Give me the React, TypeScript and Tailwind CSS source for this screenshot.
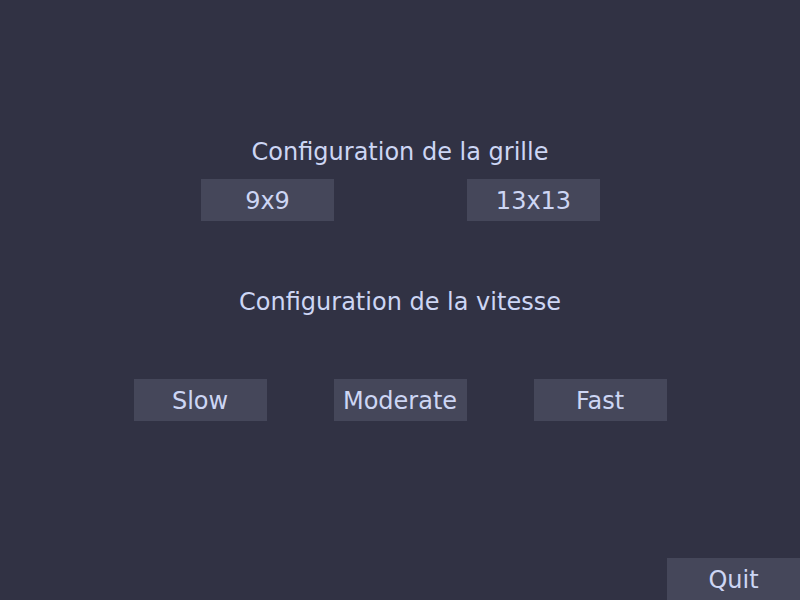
import React from 'react';

const Btn: React.FC<{ label: string }> = ({ label }) => (
  <button className="w-[133px] h-[42px] pt-[2px] bg-[#45475a] text-[#cdd6f4] text-[24px] flex items-center justify-center">
    {label}
  </button>
);

const App: React.FC = () => {
  return (
    <div
      className="w-[800px] h-[600px] bg-[#313244] flex flex-col text-[#cdd6f4]"
      style={{ fontFamily: '"DejaVu Sans", sans-serif' }}
    >
      {/* Grid size */}
      <div className="mt-[137px] h-[30px] flex items-center justify-center text-[24px]">
        Configuration de la grille
      </div>
      <div className="mt-[12px] pl-[1px] flex justify-center gap-[133px]">
        <Btn label="9x9" />
        <Btn label="13x13" />
      </div>

      {/* Speed */}
      <div className="mt-[66px] h-[30px] flex items-center justify-center text-[24px]">
        Configuration de la vitesse
      </div>
      <div className="mt-[62px] flex justify-center gap-[67px]">
        <Btn label="Slow" />
        <Btn label="Moderate" />
        <Btn label="Fast" />
      </div>

      <div className="mt-auto flex justify-end">
        <Btn label="Quit" />
      </div>
    </div>
  );
};

export default App;
